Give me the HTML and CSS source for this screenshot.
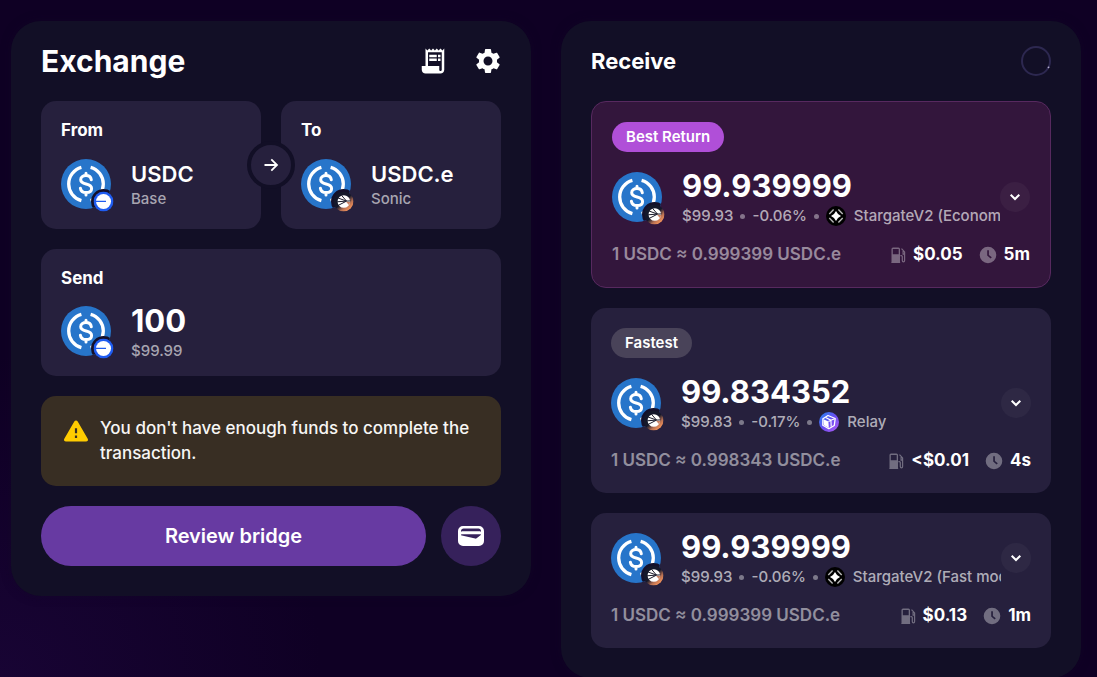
FILE: index.html
```html
<!DOCTYPE html>
<html lang="en">
<head>
    <meta charset="UTF-8">
    <meta name="viewport" content="width=device-width, initial-scale=1.0">
    <title>Exchange</title>
    <link rel="stylesheet" href="styles.css">
</head>
<body>
    <!-- Shared icons -->
    <svg class="sprite" aria-hidden="true">
        <defs>
            <linearGradient id="sonicFill" x1="0.15" y1="0.1" x2="0.85" y2="0.9">
                <stop offset="0.5" stop-color="#14182b"/>
                <stop offset="0.75" stop-color="#b87052"/>
                <stop offset="1" stop-color="#ff9a5c"/>
            </linearGradient>
            <linearGradient id="relayFill" x1="0" y1="0" x2="1" y2="1">
                <stop offset="0.1" stop-color="#2f7df2"/>
                <stop offset="0.5" stop-color="#6a4df0"/>
                <stop offset="1" stop-color="#b45cf5"/>
            </linearGradient>
            <clipPath id="coinClip"><circle cx="25" cy="25" r="25"/></clipPath>
        </defs>
        <symbol id="usdc" viewBox="0 0 50 50" overflow="visible">
            <circle cx="25" cy="25" r="25" fill="#2775ca"/>
            <g fill="none" stroke="#fff" stroke-width="3.3">
                <path d="M20.4 8.4a17.2 17.2 0 0 0 0 33.2M29.6 8.4a17.2 17.2 0 0 1 0 33.2"/>
                <path stroke-width="3" stroke-linecap="round" d="M30.3 20.8c-.4-2.7-2.5-4.2-5.3-4.2-3 0-5.3 1.5-5.3 4.1 0 5.8 10.9 2.8 10.9 8.7 0 2.7-2.4 4.2-5.6 4.2-3 0-5.2-1.6-5.6-4.4M25 14.2v2.2M25 33.8v2.2"/>
            </g>
            <circle cx="42.5" cy="42.5" r="12.5" fill="#14102a" clip-path="url(#coinClip)"/>
        </symbol>
        <symbol id="base" viewBox="0 0 20 20">
            <circle cx="10" cy="10" r="10" fill="#1f5cf0"/>
            <circle cx="10" cy="10" r="7.5" fill="#fff"/>
            <path d="M2.3 9.9h10.2" stroke="#1f5cf0" stroke-width="1.3"/>
        </symbol>
        <symbol id="sonic" viewBox="0 0 20 20">
            <circle cx="10" cy="10" r="10" fill="url(#sonicFill)"/>
            <circle cx="10.300" cy="10" r="6.300" fill="#fff"/>
            <path fill="none" stroke="#1b1c2c" stroke-width="1" d="M13 9.600L3.500 10.300M13 9.600L4 6.300M13 9.600L8 3.800M13 9.600L4.500 14M13 9.600l4-.2"/>
            <path fill="#c98163" d="M12.500 10.300l4.200.3c-.2 1.200-.7 2.100-1.300 2.900z"/>
        </symbol>
        <symbol id="stargate" viewBox="0 0 20 20">
            <circle cx="10" cy="10" r="10" fill="#000"/>
            <path fill="#fff" d="M10 5l2 3 3 2-3 2-2 3-2-3-3-2 3-2z"/>
            <path fill="none" stroke="#b9b9b9" stroke-width="1.400" d="M3.300 8.100l4.300-4.500M12.400 3.600l4.300 4.500M16.700 11.900l-4.300 4.500M7.600 16.400l-4.300-4.500"/>
        </symbol>
        <symbol id="relay" viewBox="0 0 20 20">
            <circle cx="10" cy="10" r="10" fill="url(#relayFill)"/>
            <path fill="none" stroke="#fff" stroke-width="1.300" stroke-linejoin="round" d="M9 3.500l7.200 3-.9 7-5.500 3.200-6-3.500.1-6.500z"/>
            <path fill="#fff" d="M4.500 7.300l4.900 2.300.4 6.400-5-3z"/>
            <path fill="none" stroke="#fff" stroke-width="1.100" d="M6.600 5.500l5.300 2.700.3 6.400M9.400 9.600l2.600-1.400 3.600-1.500"/>
        </symbol>
        <symbol id="fuel" viewBox="0 0 16 18">
            <path fill="currentColor" fill-rule="evenodd" d="M3 1.500h5.500A1.500 1.500 0 0 1 10 3v13.500h.3v.6H1.200v-.6h.3V3A1.500 1.500 0 0 1 3 1.500zm-.2 1.600v5.200h5.900V3.100z"/>
            <path fill="none" stroke="currentColor" stroke-width="1.200" d="M10.400 9.600h.9c.6 0 1 .4 1 1v4c0 1.700 2.300 1.700 2.300 0V5.900l-3.100-3.300M14.500 8.100h-1.400V5"/>
        </symbol>
        <symbol id="clock" viewBox="0 0 18 18">
            <path fill="currentColor" fill-rule="evenodd" d="M9 .7a8.300 8.300 0 1 1 0 16.600A8.300 8.300 0 0 1 9 .7zM8.200 4.200v5.400l3.400 3 1.200-1.300-2.900-2.400V4.200z"/>
        </symbol>
        <symbol id="chevron" viewBox="0 0 12 12">
            <path fill="none" stroke="#fff" stroke-width="2" d="M1.700 3.700L6 8l4.300-4.300"/>
        </symbol>
    </svg>

    <main class="layout">
        <section class="card">
            <header class="card-header">
                <h1>Exchange</h1>
                <div class="header-actions">
                    <button class="icon-button" type="button" aria-label="Activity">
                        <svg viewBox="0 0 24 24"><path d="M19.500 3.500L18 2l-1.500 1.500L15 2l-1.500 1.500L12 2l-1.500 1.500L9 2 7.500 3.500 6 2v14H3v3c0 1.660 1.340 3 3 3h12c1.660 0 3-1.340 3-3V2l-1.500 1.500zM19 19c0 .55-.45 1-1 1s-1-.45-1-1v-3H8V5h11v14zM9 7h6v2H9zM16 7h2v2h-2zM9 10h6v2H9zM16 10h2v2h-2z"/></svg>
                    </button>
                    <button class="icon-button" type="button" aria-label="Settings">
                        <svg viewBox="0 0 24 24"><path d="M19.140 12.940c.04-.3.06-.61.06-.94 0-.32-.02-.64-.07-.94l2.030-1.580c.18-.14.23-.41.12-.61l-1.920-3.320c-.12-.22-.37-.29-.59-.22l-2.390.96c-.5-.38-1.030-.7-1.620-.94l-.36-2.540c-.04-.24-.24-.41-.48-.41h-3.840c-.24 0-.43.17-.47.41l-.36 2.540c-.59.24-1.130.57-1.620.94l-2.390-.96c-.22-.08-.47 0-.59.22L2.740 8.870c-.12.21-.08.47.12.61l2.030 1.580c-.05.3-.09.63-.09.94s.02.64.07.94l-2.030 1.580c-.18.14-.23.41-.12.61l1.920 3.320c.12.22.37.29.59.22l2.390-.96c.5.38 1.030.7 1.620.94l.36 2.540c.05.24.24.41.48.41h3.840c.24 0 .44-.17.47-.41l.36-2.540c.59-.24 1.130-.56 1.620-.94l2.390.96c.22.08.47 0 .59-.22l1.920-3.320c.12-.22.07-.47-.12-.61l-2.010-1.580zM12 15.600c-1.980 0-3.600-1.620-3.600-3.600s1.620-3.600 3.600-3.600 3.600 1.620 3.600 3.600-1.620 3.600-3.600 3.600z"/></svg>
                    </button>
                </div>
            </header>

            <div class="tokens">
                <div class="box">
                    <h2 class="label">From</h2>
                    <div class="token">
                        <svg class="coin" viewBox="0 0 50 50"><use href="#usdc"/><use href="#base" x="32.500" y="32.500" width="20" height="20"/></svg>
                        <div>
                            <div class="token-name">USDC</div>
                            <div class="sub">Base</div>
                        </div>
                    </div>
                </div>
                <button class="swap" type="button" aria-label="Reverse direction">
                    <svg viewBox="0 0 16 16"><path fill="none" stroke="#fff" stroke-width="1.800" d="M1.500 8h12M8.300 2.300L14 8l-5.700 5.700"/></svg>
                </button>
                <div class="box">
                    <h2 class="label">To</h2>
                    <div class="token">
                        <svg class="coin" viewBox="0 0 50 50"><use href="#usdc"/><use href="#sonic" x="32.500" y="32.500" width="20" height="20"/></svg>
                        <div>
                            <div class="token-name">USDC.e</div>
                            <div class="sub">Sonic</div>
                        </div>
                    </div>
                </div>
            </div>

            <div class="box box-send">
                <label class="label" for="sendAmount">Send</label>
                <div class="token">
                    <svg class="coin" viewBox="0 0 50 50"><use href="#usdc"/><use href="#base" x="32.500" y="32.500" width="20" height="20"/></svg>
                    <div class="send-info">
                        <input class="amount" id="sendAmount" type="text" inputmode="decimal" value="100">
                        <div class="sub">$99.99</div>
                    </div>
                </div>
            </div>

            <div class="warning" role="alert">
                <svg viewBox="0 0 24 24"><path fill="#fc0" fill-rule="evenodd" d="M10.300 2.500a2 2 0 0 1 3.400 0l10 17.300c.7 1.300 0 2.700-1.500 2.700H1.800c-1.500 0-2.200-1.400-1.500-2.700zM10.900 9.300v4.900h2.200V9.300zM10.900 16.600v2.300h2.200v-2.300z"/></svg>
                <p>You don't have enough funds to complete the transaction.</p>
            </div>

            <div class="actions">
                <button class="review" type="button">Review bridge</button>
                <button class="wallet" type="button" aria-label="Send to wallet">
                    <svg viewBox="0 0 26 20"><path fill="#fff" fill-rule="evenodd" d="M5 0h16a5 5 0 0 1 5 5v10a5 5 0 0 1-5 5H5a5 5 0 0 1-5-5V5a5 5 0 0 1 5-5zM5.500 2.500C4.200 2.500 3 3.500 3 4.900v.8c.7-.4 1.500-.5 2.500-.5h15c1 0 1.800.1 2.500.5v-.8c0-1.400-1.200-2.400-2.500-2.400zM3.200 8.300c-.1.900 0 1.100.7 1.300l13.300 3c.5.100 1 0 1.400-.3l3.900-3c.5-.4.5-.6.300-1z"/></svg>
                </button>
            </div>
        </section>

        <section class="card">
            <header class="card-header">
                <h2>Receive</h2>
                <svg class="spinner" viewBox="0 0 30 30" role="img" aria-label="Refreshing"><circle cx="15" cy="15" r="14" fill="none" stroke="#2d2850" stroke-width="2"/><circle cx="27.500" cy="21.300" r="0.900" fill="#b7b1cf"/></svg>
            </header>

            <div class="quotes">
                <article class="quote quote-best">
                    <span class="badge badge-best">Best Return</span>
                    <div class="quote-main">
                        <svg class="coin" viewBox="0 0 50 50"><use href="#usdc"/><use href="#sonic" x="32.500" y="32.500" width="20" height="20"/></svg>
                        <div class="quote-info">
                            <div class="amount">99.939999</div>
                            <div class="details">
                                <span>$99.93</span><i class="dot"></i><span>-0.06%</span><i class="dot"></i>
                                <span class="provider"><svg viewBox="0 0 20 20"><use href="#stargate"/></svg>StargateV2 (Economy)</span>
                            </div>
                        </div>
                        <button class="expand" type="button" aria-label="Show route"><svg viewBox="0 0 12 12"><use href="#chevron"/></svg></button>
                    </div>
                    <div class="quote-foot">
                        <span class="rate">1 USDC ≈ 0.999399 USDC.e</span>
                        <span class="stat"><svg viewBox="0 0 16 18" class="fuel"><use href="#fuel"/></svg>$0.05</span>
                        <span class="stat"><svg viewBox="0 0 18 18" class="clock"><use href="#clock"/></svg>5m</span>
                    </div>
                </article>

                <article class="quote">
                    <span class="badge">Fastest</span>
                    <div class="quote-main">
                        <svg class="coin" viewBox="0 0 50 50"><use href="#usdc"/><use href="#sonic" x="32.500" y="32.500" width="20" height="20"/></svg>
                        <div class="quote-info">
                            <div class="amount">99.834352</div>
                            <div class="details">
                                <span>$99.83</span><i class="dot"></i><span>-0.17%</span><i class="dot"></i>
                                <span class="provider"><svg viewBox="0 0 20 20"><use href="#relay"/></svg>Relay</span>
                            </div>
                        </div>
                        <button class="expand" type="button" aria-label="Show route"><svg viewBox="0 0 12 12"><use href="#chevron"/></svg></button>
                    </div>
                    <div class="quote-foot">
                        <span class="rate">1 USDC ≈ 0.998343 USDC.e</span>
                        <span class="stat"><svg viewBox="0 0 16 18" class="fuel"><use href="#fuel"/></svg>&lt;$0.01</span>
                        <span class="stat"><svg viewBox="0 0 18 18" class="clock"><use href="#clock"/></svg>4s</span>
                    </div>
                </article>

                <article class="quote">
                    <div class="quote-main">
                        <svg class="coin" viewBox="0 0 50 50"><use href="#usdc"/><use href="#sonic" x="32.500" y="32.500" width="20" height="20"/></svg>
                        <div class="quote-info">
                            <div class="amount">99.939999</div>
                            <div class="details">
                                <span>$99.93</span><i class="dot"></i><span>-0.06%</span><i class="dot"></i>
                                <span class="provider"><svg viewBox="0 0 20 20"><use href="#stargate"/></svg>StargateV2 (Fast mode)</span>
                            </div>
                        </div>
                        <button class="expand" type="button" aria-label="Show route"><svg viewBox="0 0 12 12"><use href="#chevron"/></svg></button>
                    </div>
                    <div class="quote-foot">
                        <span class="rate">1 USDC ≈ 0.999399 USDC.e</span>
                        <span class="stat"><svg viewBox="0 0 16 18" class="fuel"><use href="#fuel"/></svg>$0.13</span>
                        <span class="stat"><svg viewBox="0 0 18 18" class="clock"><use href="#clock"/></svg>1m</span>
                    </div>
                </article>
            </div>
        </section>
    </main>
</body>
</html>
```
FILE: styles.css
```css
* {
    box-sizing: border-box;
}
body {
    margin: 0;
    min-height: 100vh;
    font-family: Inter, sans-serif;
    font-size: 15px;
    color: #fff;
    background: radial-gradient(circle at 0 100%, #180434 0, #0f0024 25%) #0f0024;
}
h1, h2, p {
    margin: 0;
}
button, input {
    font: inherit;
    color: inherit;
    border: none;
    padding: 0;
}
button {
    cursor: pointer;
    display: flex;
    align-items: center;
    justify-content: center;
}
svg {
    display: block;
    flex: none;
}
.sprite {
    position: absolute;
    width: 0;
    height: 0;
}
.layout {
    display: grid;
    grid-template-columns: 1fr 1fr;
    align-items: start;
    gap: 30px;
    padding: 21px 16px 0 11px;
}
.card {
    min-width: 0;
    padding: 20px 30px 30px;
    border-radius: 30px;
    background: #120f26;
    box-shadow: 0 0 10px rgba(18, 8, 38, 0.5);
}
.card-header {
    display: flex;
    align-items: center;
    justify-content: space-between;
    height: 40px;
    margin-bottom: 20px;
}
.card-header h1 {
    font-size: 30px;
    font-weight: 700;
}
.card-header h2 {
    font-size: 22px;
    font-weight: 700;
}
.header-actions {
    display: flex;
    gap: 15px;
    margin-right: -7px;
}
.icon-button {
    width: 40px;
    height: 40px;
    background: none;
}
.icon-button svg {
    width: 30px;
    height: 30px;
    fill: #fff;
}
.spinner {
    width: 30px;
    height: 30px;
}

/* Left column */
.tokens {
    position: relative;
    display: grid;
    grid-template-columns: 1fr 1fr;
    gap: 20px;
    margin-bottom: 20px;
}
.box {
    display: flex;
    flex-direction: column;
    gap: 20px;
    padding: 20px;
    border-radius: 15px;
    background: #26203d;
}
.box-send {
    gap: 19px;
    padding-bottom: 10px;
    margin-bottom: 20px;
}
.label {
    font-size: 17px;
    line-height: 18px;
    font-weight: 700;
}
.token {
    display: flex;
    gap: 20px;
}
.coin {
    width: 50px;
    height: 50px;
    overflow: visible;
}
.token-name {
    font-size: 22px;
    line-height: 30px;
    font-weight: 600;
}
.sub {
    line-height: 20px;
    font-weight: 500;
    color: #a8a5b1;
}
.swap {
    position: absolute;
    top: 50%;
    left: 50%;
    transform: translate(-50%, -50%);
    width: 48px;
    height: 48px;
    border: 4px solid #120f26;
    border-radius: 50%;
    background: #26203d;
}
.swap svg {
    width: 16px;
    height: 16px;
}
.amount {
    font-size: 31px;
    line-height: 38px;
    font-weight: 700;
}
.send-info {
    flex: 1;
    min-width: 0;
}
.send-info .amount {
    display: block;
    width: 100%;
    height: 30px;
    background: none;
    outline: none;
}
.send-info .sub {
    line-height: 30px;
}
.warning {
    display: flex;
    align-items: flex-start;
    gap: 12px;
    padding: 20px 20px 20px 23px;
    margin-bottom: 20px;
    border-radius: 15px;
    background: #382e23;
    font-size: 17px;
    line-height: 25px;
    font-weight: 500;
    color: #f7f6f4;
}
.warning svg {
    width: 24px;
    height: 24px;
    margin-top: 3px;
}
.actions {
    display: flex;
    gap: 15px;
}
.review {
    flex: 1;
    height: 60px;
    border-radius: 30px;
    background: #673aa2;
    font-size: 20px;
    font-weight: 600;
}
.wallet {
    width: 60px;
    height: 60px;
    border-radius: 50%;
    background: #36215b;
}
.wallet svg {
    width: 26px;
    height: 20px;
}

/* Right column */
.quotes {
    display: flex;
    flex-direction: column;
    gap: 20px;
}
.quote {
    display: flex;
    flex-direction: column;
    gap: 20px;
    padding: 20px;
    border-radius: 15px;
    background: #26203d;
}
.quote-best {
    border: 1px solid #57295f;
    background: #33163c;
}
.badge {
    align-self: flex-start;
    padding: 0 14px;
    border-radius: 15px;
    background: #494359;
    line-height: 30px;
    font-weight: 600;
}
.badge-best {
    background: #b04fd8;
}
.quote-main {
    display: flex;
    align-items: center;
    height: 50px;
}
.quote-info {
    flex: 1;
    min-width: 0;
    margin-left: 20px;
    overflow: hidden;
    white-space: nowrap;
}
.details {
    display: flex;
    align-items: center;
    gap: 7px;
    line-height: 22px;
    font-weight: 500;
    color: rgba(255, 255, 255, 0.65);
}
.dot {
    flex: none;
    width: 5px;
    height: 5px;
    border-radius: 50%;
    background: rgba(255, 255, 255, 0.4);
}
.provider {
    display: flex;
    align-items: center;
    gap: 8px;
}
.provider svg {
    width: 20px;
    height: 20px;
}
.expand {
    flex: none;
    width: 30px;
    height: 30px;
    border-radius: 50%;
    background: rgba(255, 255, 255, 0.04);
}
.expand svg {
    width: 12px;
    height: 12px;
}
.quote-foot {
    display: flex;
    align-items: center;
    gap: 16px;
    font-size: 17px;
    line-height: 25px;
}
.rate {
    margin-right: auto;
    font-weight: 600;
    color: rgba(255, 255, 255, 0.5);
}
.stat {
    display: flex;
    align-items: center;
    gap: 7px;
    font-weight: 700;
}
.stat svg {
    height: 18px;
    color: rgba(255, 255, 255, 0.35);
}
.fuel {
    width: 16px;
}
.clock {
    width: 18px;
}
```
